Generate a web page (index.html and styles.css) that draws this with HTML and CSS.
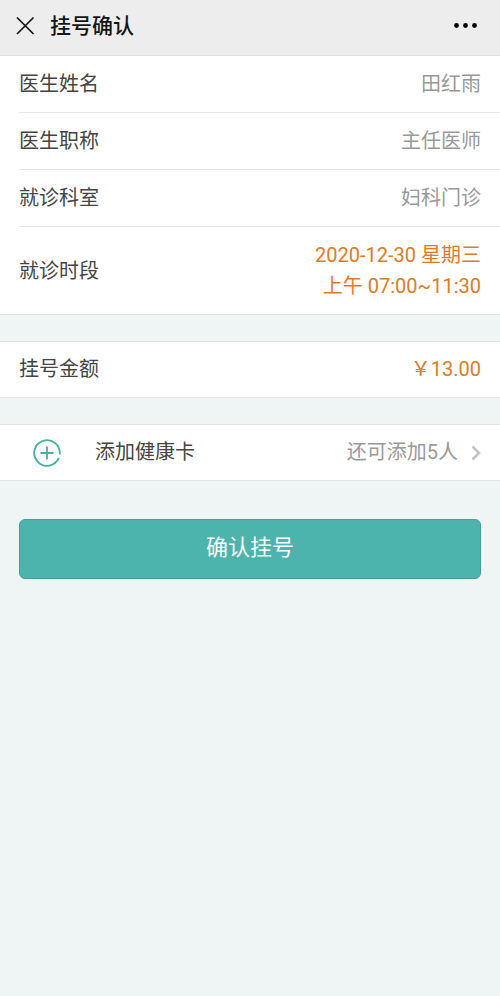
FILE: index.html
```html
<!DOCTYPE html>
<html lang="zh-CN">
<head>
<meta charset="utf-8">
<meta name="viewport" content="width=device-width, initial-scale=1">
<title>挂号确认</title>
<link rel="stylesheet" href="styles.css">
</head>
<body>
<header class="topbar">
  <button class="icon-button" type="button" aria-label="关闭">
    <svg width="20" height="20" viewBox="0 0 20 20" fill="none" stroke="#151515" stroke-width="1.7"><path d="M2 1.500l16.500 16.500M18.500 1.500L2 18"/></svg>
  </button>
  <h1 class="title">挂号确认</h1>
  <button class="icon-button" type="button" aria-label="更多">
    <svg width="24" height="6" viewBox="0 0 24 6" fill="#050505"><circle cx="2.500" cy="2.500" r="2.400"/><circle cx="11.500" cy="2.500" r="2.400"/><circle cx="20.500" cy="2.500" r="2.400"/></svg>
  </button>
</header>
<main>
  <dl class="group">
    <div class="row"><dt>医生姓名</dt><dd>田红雨</dd></div>
    <div class="row"><dt>医生职称</dt><dd>主任医师</dd></div>
    <div class="row"><dt>就诊科室</dt><dd>妇科门诊</dd></div>
    <div class="row"><dt>就诊时段</dt><dd class="accent">2020-12-30 星期三<br>上午 07:00~11:30</dd></div>
  </dl>
  <dl class="group single">
    <div class="row"><dt>挂号金额</dt><dd class="accent">￥13.00</dd></div>
  </dl>
  <div class="group single">
    <a class="row add-card" href="#">
      <svg class="plus" width="28" height="28" viewBox="0 0 28 28" fill="none" stroke="#45afa6" stroke-width="1.800"><path d="M26.700 15.500A12.800 12.800 0 1 0 25.800 18.900"/><path d="M14 7.500v13M7.500 14h13"/></svg>
      <span class="add-label">添加健康卡</span>
      <span class="hint">还可添加5人</span>
      <svg width="10" height="16" viewBox="0 0 10 16" fill="none" stroke="#c4c4c8" stroke-width="2.600"><path d="M1.500 1.500L8 8l-6.500 6.500"/></svg>
    </a>
  </div>
  <button class="confirm" type="button">确认挂号</button>
</main>
</body>
</html>
```
FILE: styles.css
```css
* { box-sizing: border-box; }
body {
  margin: 0;
  min-height: 100vh;
  background: #eff5f5;
  color: #444;
  font-family: Roboto, "Noto Sans CJK SC", sans-serif;
  font-size: 20px;
  line-height: 31px;
}
button { font: inherit; cursor: pointer; }
.topbar {
  display: flex;
  align-items: center;
  gap: 15px;
  height: 56px;
  padding: 0 22px 4px 15px;
  background: #ededed;
  border-bottom: 1px solid #dfdfdf;
}
.icon-button { display: flex; padding: 0; border: 0; background: none; }
.title { flex: 1; margin: 0; padding-top: 2px; color: #151515; font-size: 21px; font-weight: 500; }
.group {
  margin: 0 0 26px;
  padding-left: 19px;
  background: #fff;
  border-bottom: 1px solid #e0e3e3;
}
.single { border-top: 1px solid #e0e3e3; }
.row {
  display: flex;
  align-items: center;
  justify-content: space-between;
  padding: 13px 19px 12px 0;
}
.row + .row { border-top: 1px solid #e6e6e6; }
.single .row { padding-top: 12px; }
dd { margin: 0; color: #999; text-align: right; }
.accent { color: #e07b24; }
.add-card { color: inherit; text-decoration: none; }
.plus { margin: 0 34px 0 14px; }
.add-label { flex: 1; }
.hint { margin-right: 13px; color: #999; }
.confirm {
  display: block;
  width: calc(100% - 38px);
  height: 60px;
  margin: 38px 19px 0;
  padding: 0 0 4px;
  border: 1px solid #469f97;
  border-radius: 6px;
  background: #4cb4ac;
  color: #fff;
  font-size: 22px;
}
```
